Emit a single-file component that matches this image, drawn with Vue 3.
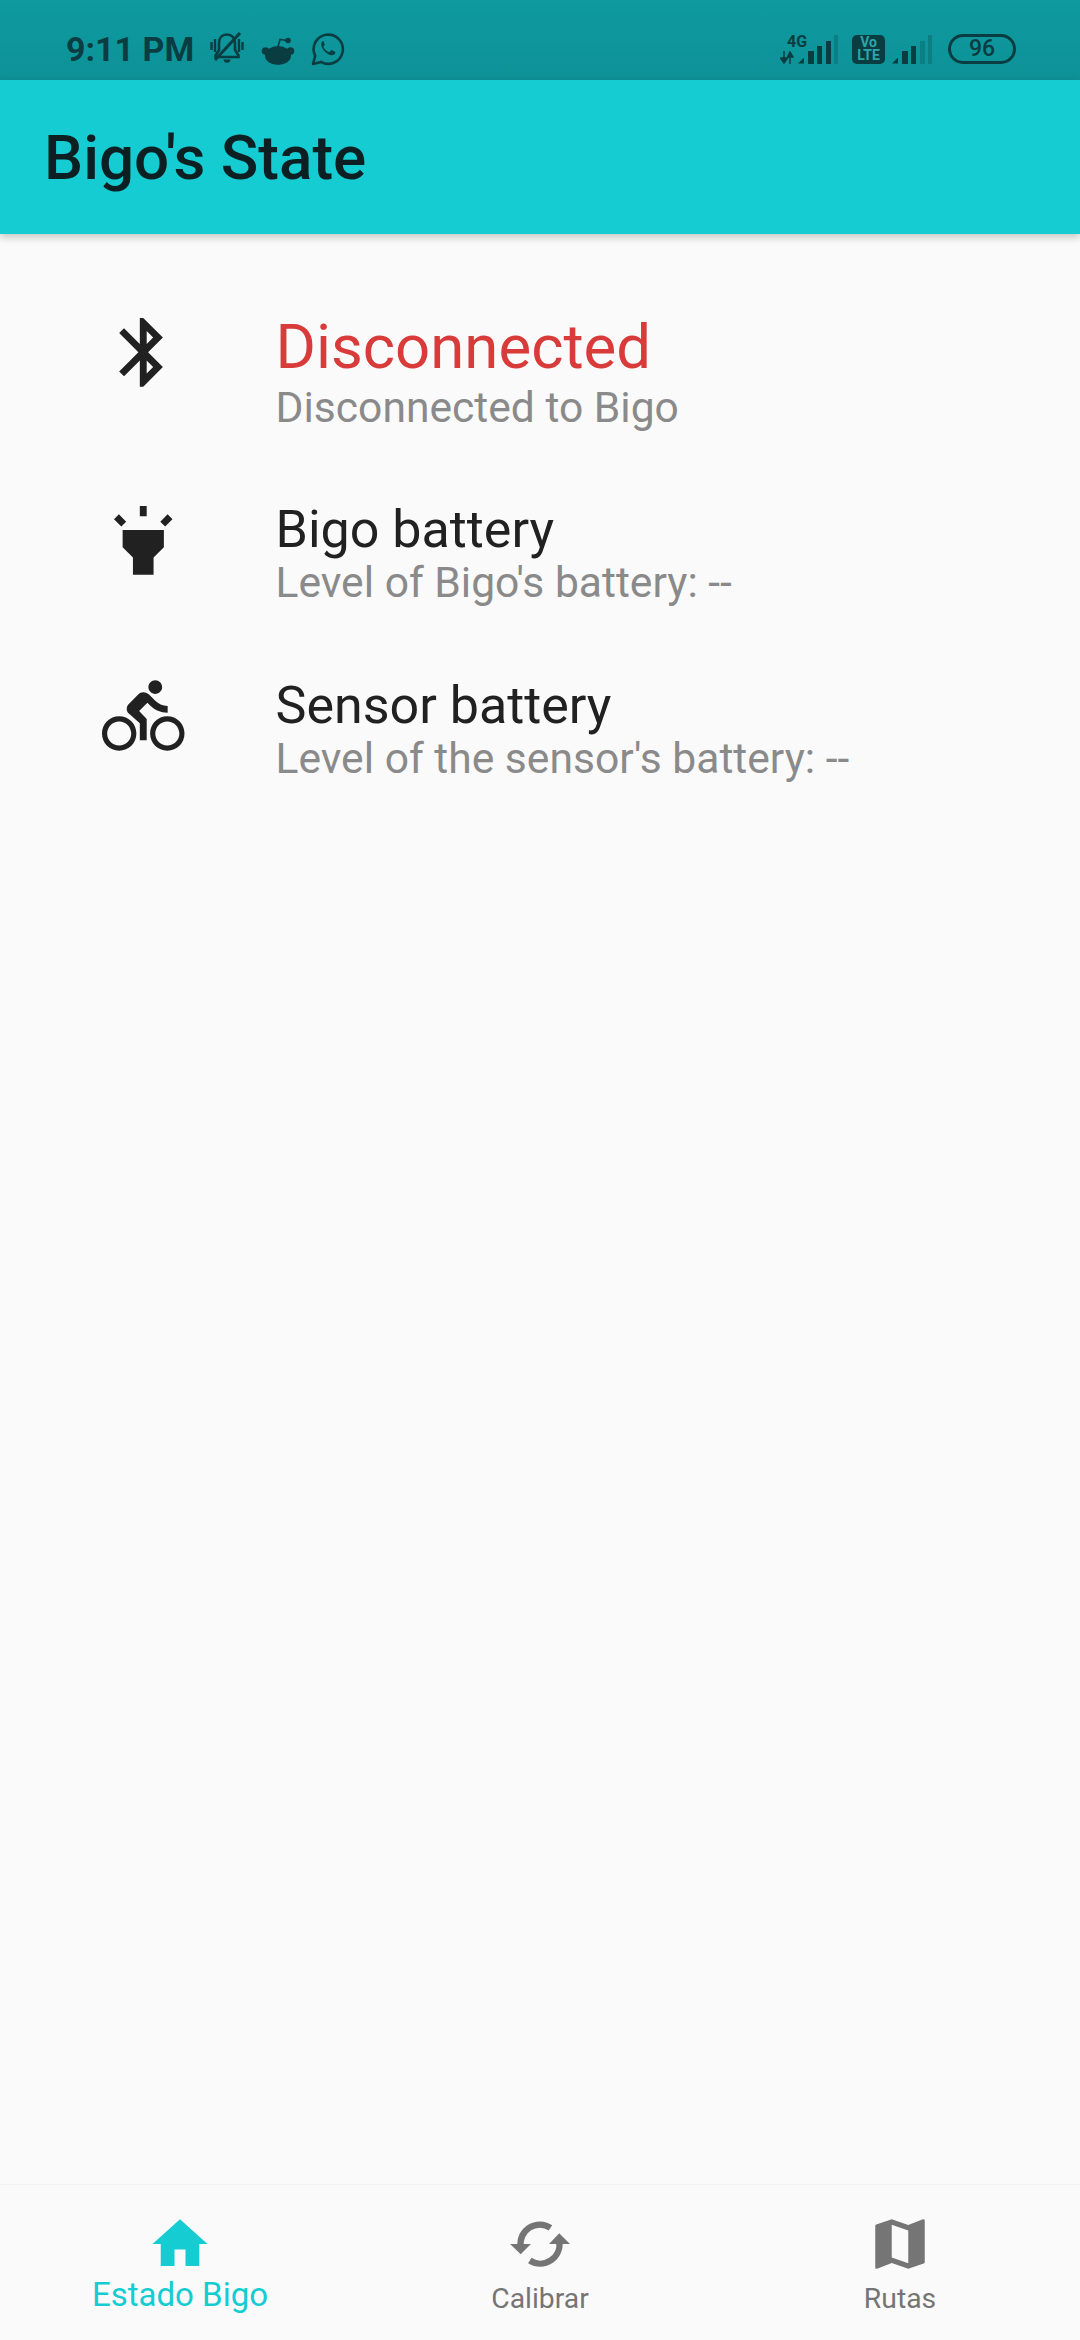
<script setup>
const rows = [
  {
    title: 'Disconnected',
    sub: 'Disconnected to Bigo',
    main: true,
    icon: 'M17.71 7.71L12 2h-1v7.59L6.41 5 5 6.41 10.59 12 5 17.59 6.41 19 11 14.41V22h1l5.71-5.71-4.3-4.29 4.3-4.29zM13 5.83l1.88 1.88L13 9.59V5.83zm1.88 10.46L13 18.17v-3.76l1.88 1.88z',
  },
  {
    title: 'Bigo battery',
    sub: "Level of Bigo's battery: --",
    icon: 'M6 14l3 3v5h6v-5l3-3V9H6v5zm5-12h2v3h-2V2zM3.5 5.875L4.914 4.46l2.12 2.122L5.62 7.997zm13.46.71l2.123-2.12 1.414 1.414L18.375 8z',
  },
  {
    title: 'Sensor battery',
    sub: "Level of the sensor's battery: --",
    icon: 'M15.5 5.5c1.1 0 2-.9 2-2s-.9-2-2-2-2 .9-2 2 .9 2 2 2zM5 12c-2.8 0-5 2.2-5 5s2.2 5 5 5 5-2.2 5-5-2.2-5-5-5zm0 8.5c-1.9 0-3.5-1.6-3.5-3.5s1.6-3.5 3.5-3.5 3.5 1.6 3.5 3.5-1.6 3.5-3.5 3.5zm5.8-10l2.4-2.4.8.8c1.3 1.3 3 2.1 5.1 2.1V9c-1.5 0-2.7-.6-3.6-1.5l-1.9-1.9c-.5-.4-1-.6-1.6-.6s-1.1.2-1.4.6L7.8 8.4c-.4.4-.6.9-.6 1.4 0 .6.2 1.1.6 1.4L11 14v5h2v-6.2l-2.2-2.3zM19 12c-2.8 0-5 2.2-5 5s2.2 5 5 5 5-2.2 5-5-2.2-5-5-5zm0 8.5c-1.9 0-3.5-1.6-3.5-3.5s1.6-3.5 3.5-3.5 3.5 1.6 3.5 3.5-1.6 3.5-3.5 3.5z',
  },
]
const tabs = [
  { label: 'Estado Bigo', active: true, icon: 'M10 20v-6h4v6h5v-8h3L12 3 2 12h3v8z' },
  {
    label: 'Calibrar',
    icon: 'M1.100 12h7.600L5 15.700zM15.300 12h7.600L19 8.100z',
    arc: 'M5 13A7 7 0 0 1 15.800 6.100M19 11A7 7 0 0 1 8.300 18',
  },
  { label: 'Rutas', icon: 'M20.5 3l-.16.03L15 5.1 9 3 3.36 4.9c-.21.07-.36.25-.36.48V20.500c0 .28.22.5.5.5l.16-.03L9 18.900l6 2.100 5.640-1.900c.21-.07.36-.25.36-.48V3.500c0-.28-.22-.5-.5-.5zM15 19l-6-2.110V5l6 2.110V19z' },
]
const signal = [
  { h: 6, w: 6, wedge: true },
  { h: 13, w: 6 },
  { h: 18, w: 5 },
  { h: 23, w: 5 },
  { h: 29, w: 4, off: true },
]
const signal2 = [
  { h: 6, w: 6, wedge: true },
  { h: 13, w: 6 },
  { h: 18, w: 5 },
  { h: 23, w: 5, off: true },
  { h: 29, w: 4, off: true },
]
</script>

<template>
  <div class="screen">
    <div class="status">
      <div class="status-left">
        <span class="time">9:11 PM</span>
        <svg class="st-bell" viewBox="0 0 36 36" width="36" height="36">
          <path d="M18 3.500c-5 0-8 3.500-8 8.500v7l-3.500 5.500v1.500h23v-1.500L26 19v-7c0-5-3-8.500-8-8.500z" fill="none" stroke="#0a3d42" stroke-width="2.600" />
          <path d="M14.500 28.500h7c0 2-1.500 3.300-3.500 3.300s-3.500-1.300-3.500-3.300z" fill="#0a3d42" />
          <path d="M31 2 6 29" stroke="#0a3d42" stroke-width="3" />
          <path d="M2.500 11v8M6 8v13M30 8v13M33.500 11v8" stroke="#0a3d42" stroke-width="2.400" />
        </svg>
        <svg class="st-reddit" viewBox="0 0 34 30" width="34" height="30">
          <ellipse cx="17" cy="19.500" rx="13" ry="9.500" fill="#0a3d42" />
          <circle cx="4.500" cy="15" r="3.800" fill="#0a3d42" />
          <circle cx="29.500" cy="15" r="3.800" fill="#0a3d42" />
          <path d="M17 11 19 3.500 26 4.500" fill="none" stroke="#0a3d42" stroke-width="1.600" />
          <circle cx="27" cy="4.500" r="2.800" fill="#0a3d42" />
        </svg>
        <svg class="st-wa" viewBox="0 0 34 34" width="34" height="34">
          <path d="M2 32l2.200-8.200A14.600 14.600 0 1 1 10 29.900z" fill="none" stroke="#0a3d42" stroke-width="2.600" stroke-linejoin="round" />
          <path d="M12.300 9.200c-.7 0-1.800.7-2 2.500-.3 2.200 1 5 3.300 7.500 2.500 2.600 5.500 4.200 7.800 4 1.800-.2 3-1.500 3-2.600 0-.5-.1-.7-.5-.9l-3-1.500c-.4-.2-.7-.1-1 .2l-1.300 1.600c-.3.300-.5.300-.9.100-2.300-1.100-4-2.700-5.200-4.900-.2-.4-.1-.6.1-.8l1-1.300c.2-.3.2-.5.100-.8l-1.300-3c-.2-.3-.4-.3-2.100-.1z" fill="#0a3d42" />
        </svg>
      </div>
      <div class="status-right">
        <div class="net">
          <span class="net-4g">4G</span>
          <svg class="net-arrows" viewBox="0 0 14 13" width="14" height="13">
            <path d="M4 0v11M0.500 7 4 12 7.500 7ZM10 13V2M7.500 6 10 1 13 6Z" fill="#0a3d42" stroke="#0a3d42" stroke-width="1.500" />
          </svg>
        </div>
        <div class="bars">
          <i
            v-for="(b, i) in signal"
            :key="i"
            :class="{ off: b.off, wedge: b.wedge }"
            :style="{ height: b.h + 'px', width: b.w + 'px' }"
          ></i>
        </div>
        <div class="volte"><span>Vo</span><span>LTE</span></div>
        <div class="bars bars-2">
          <i
            v-for="(b, i) in signal2"
            :key="i"
            :class="{ off: b.off, wedge: b.wedge }"
            :style="{ height: b.h + 'px', width: b.w + 'px' }"
          ></i>
        </div>
        <div class="battery">96</div>
      </div>
    </div>

    <header class="appbar">Bigo's State</header>

    <main class="list">
      <div v-for="row in rows" :key="row.title" class="row" :class="{ 'row-main': row.main }">
        <svg class="row-icon" viewBox="0 0 24 24" width="82.5" height="82.5">
          <path :d="row.icon" fill="#212121" />
        </svg>
        <div class="row-text">
          <div class="row-title">{{ row.title }}</div>
          <div class="row-sub">{{ row.sub }}</div>
        </div>
      </div>
    </main>

    <nav class="nav">
      <div v-for="tab in tabs" :key="tab.label" class="tab" :class="{ active: tab.active }">
        <svg class="tab-icon" viewBox="0 0 24 24" width="66" height="66">
          <path :d="tab.icon" fill="currentColor" />
          <path v-if="tab.arc" :d="tab.arc" fill="none" stroke="currentColor" stroke-width="2.300" />
        </svg>
        <span class="tab-label">{{ tab.label }}</span>
      </div>
    </nav>
  </div>
</template>

<style>
html, body {
  margin: 0;
  background: #fafafa;
}
</style>

<style scoped>
.screen {
  width: 1080px;
  height: 2340px;
  display: flex;
  flex-direction: column;
  background: #fafafa;
  font-family: Roboto, "Liberation Sans", sans-serif;
  overflow: hidden;
}
.status {
  height: 80px;
  flex: none;
  display: flex;
  justify-content: space-between;
  align-items: center;
  padding: 0 64px 0 66px;
  box-sizing: border-box;
  background: linear-gradient(#0e9aa0, #0d9297);
  color: #0a3d42;
}
.status-left {
  display: flex;
  align-items: center;
  padding-top: 18px;
}
.time {
  font-size: 34px;
  font-weight: 700;
  margin-right: 15px;
}
.st-reddit {
  margin-left: 16px;
  margin-top: 4px;
}
.st-wa {
  margin-left: 16px;
}
.status-right {
  display: flex;
  align-items: flex-end;
  padding-top: 17px;
}
.net {
  width: 18px;
  height: 29px;
  display: flex;
  flex-direction: column;
  align-items: flex-start;
}
.net-4g {
  font-size: 16px;
  font-weight: 700;
  line-height: 14px;
  margin-left: 7px;
  margin-bottom: 2px;
}
.bars {
  display: flex;
  align-items: flex-end;
  gap: 3.500px;
}
.bars i {
  display: block;
  background: #0a3d42;
}
.bars i.off {
  background: #0c7f85;
}
.bars i.wedge {
  clip-path: polygon(0 100%, 100% 0, 100% 100%);
}
.volte {
  width: 33px;
  height: 29px;
  margin-left: 14px;
  border-radius: 5px;
  background: #0a3d42;
  color: #2aa6ab;
  font-size: 14px;
  font-weight: 700;
  line-height: 13px;
  display: flex;
  flex-direction: column;
  align-items: center;
  justify-content: center;
}
.bars-2 {
  margin-left: 7px;
}
.battery {
  width: 68px;
  height: 30px;
  box-sizing: border-box;
  margin-left: 16px;
  border: 3px solid #0a3d42;
  border-radius: 15px;
  font-size: 23px;
  font-weight: 500;
  line-height: 24px;
  text-align: center;
}
.appbar {
  height: 154px;
  flex: none;
  display: flex;
  align-items: center;
  padding-left: 44px;
  background: #14ccd1;
  color: #0c1f22;
  font-size: 62px;
  font-weight: 500;
  box-shadow: 0 3px 8px rgba(0, 0, 0, 0.22);
  position: relative;
}
.list {
  flex: 1;
  padding-top: 77px;
}
.row {
  display: flex;
  align-items: flex-start;
  height: 176px;
  padding-left: 102px;
}
.row-main {
  height: 188px;
}
.row-icon {
  flex: none;
}
.row-text {
  margin-left: 91px;
}
.row-title {
  font-size: 52px;
  line-height: 56px;
  color: #212121;
  margin-top: 3px;
}
.row-main .row-title {
  font-size: 61.700px;
  line-height: 71px;
  color: #d93a3a;
  margin-top: 1px;
}
.row-sub {
  font-size: 42.600px;
  line-height: 48px;
  color: #8a8a8a;
}
.nav {
  flex: none;
  height: 156px;
  display: flex;
  background: #fafafa;
  border-top: 1px solid #f2f2f2;
  box-sizing: border-box;
  padding-top: 26px;
}
.tab {
  flex: 1;
  display: flex;
  flex-direction: column;
  align-items: center;
  color: #757575;
}
.tab-label {
  font-size: 28.300px;
  line-height: 36px;
  margin-top: 4px;
}
.tab.active {
  color: #14ccd1;
}
.tab.active .tab-label {
  font-size: 33px;
  margin-top: 0;
}
</style>
